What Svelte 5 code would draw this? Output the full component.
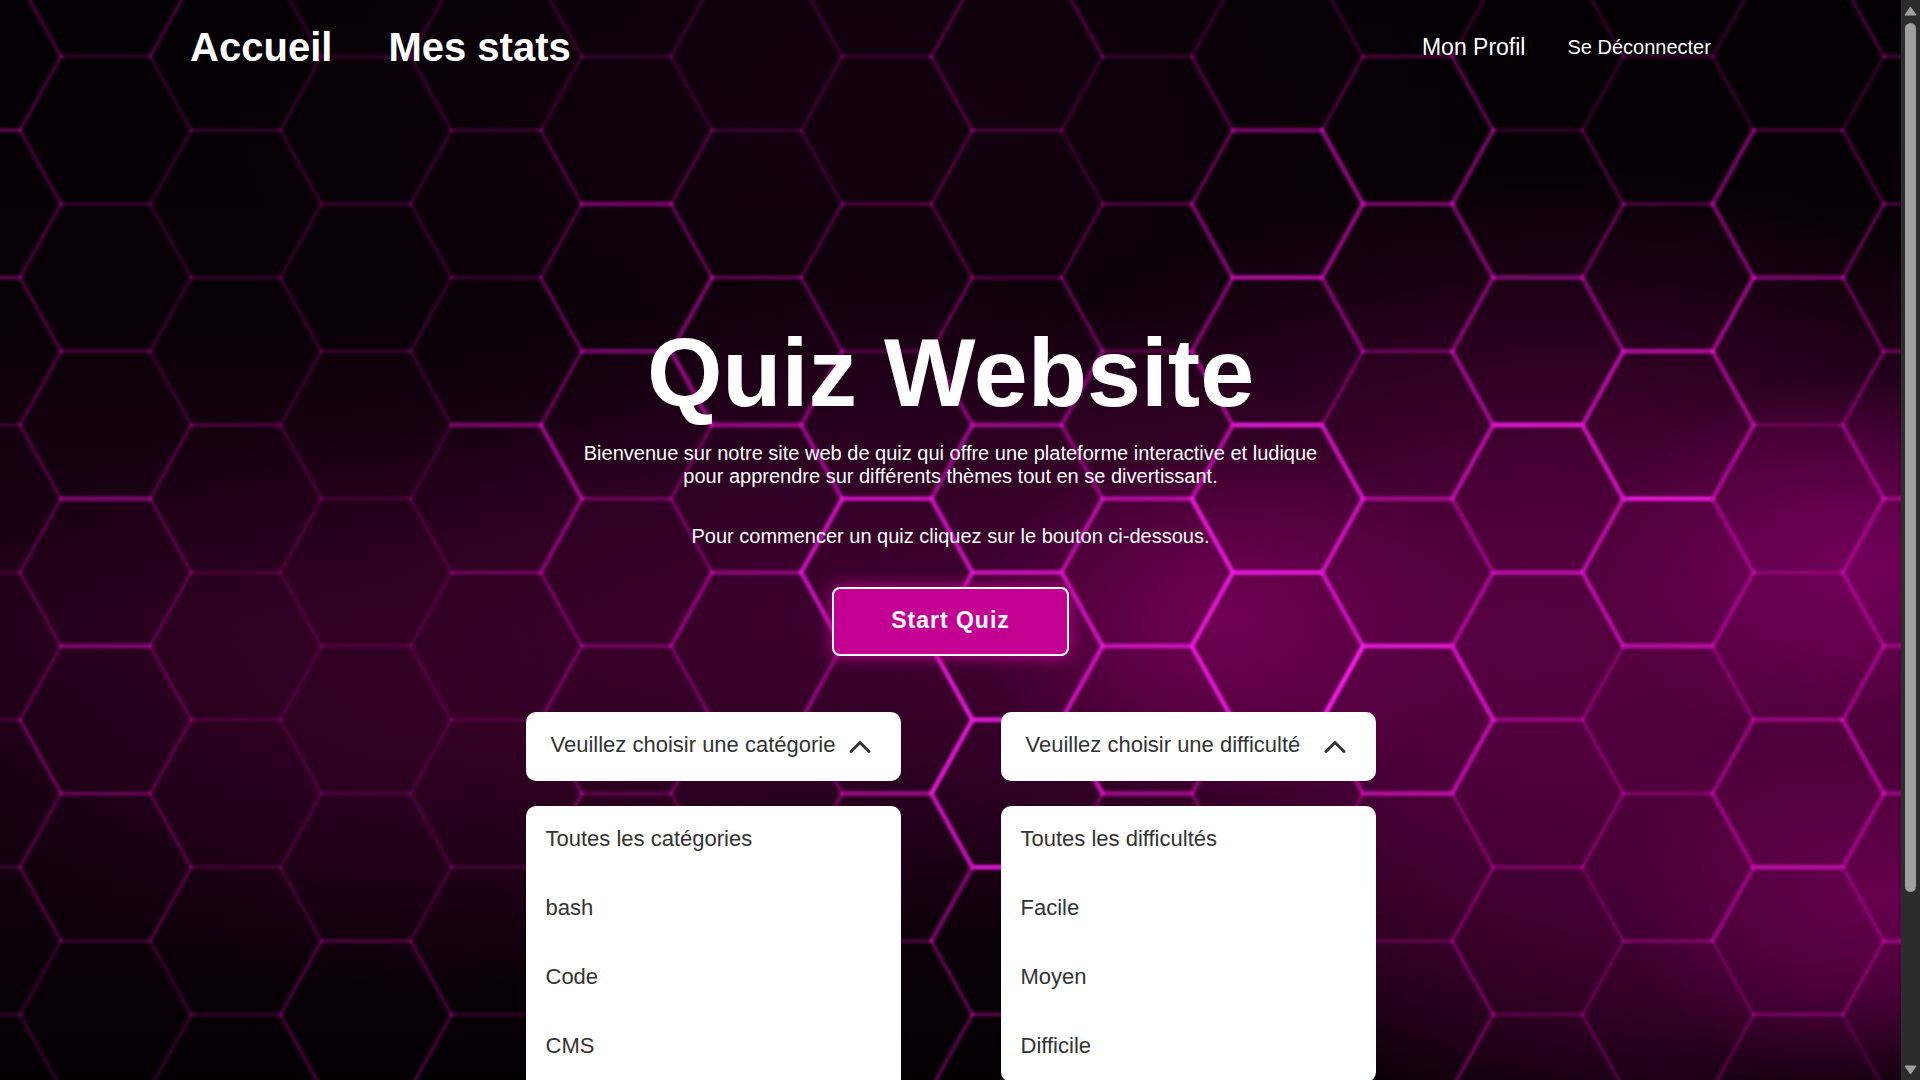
<script>
  // Honeycomb backdrop: every string holds edge brightness (0-9), top to bottom.
  const COL = 130.2;
  const ROW = 73.7;
  const rowY = (j) => 56.5 + ROW * j;

  // Flat edges, one string per column, starting with column -1.
  const flats = [
    '3311111', '1124431', '1121111', '1111112', '1143111', '1443321', '1354432', '1227652',
    '2257883', '1226752', '4688742', '2435862', '1486432', '1268633', '2423463', '2234444',
  ];

  // Slanted edges, one string per gap between columns.
  const slants = [
    '222222222232211', '211111222222211', '111111111111122', '111111111111122',
    '112233543333222', '112345334332222', '111234577433222', '222234577887433',
    '211234467773322', '123445688843222', '125543777953222', '134445645763333',
    '112346766333222', '114455544344422', '212333444454331',
  ];

  const paint = (level) => {
    const t = level / 9;
    return `rgba(${Math.round(165 + 75 * t)}, ${Math.round(30 * t)}, ${Math.round(130 + 100 * t)}, ${(0.15 + 0.83 * t).toFixed(2)})`;
  };

  const edges = [];
  flats.forEach((levels, i) => {
    const c = i - 1;
    const x = 61 + COL * c;
    const first = c % 2 === 0 ? 0 : 1;
    [...levels].forEach((v, k) => {
      const y = rowY(first + 2 * k);
      edges.push({ x1: x, y1: y, x2: x + 89, y2: y, v: Number(v) });
    });
  });
  slants.forEach((levels, g) => {
    const nodeX = (j) => (Math.abs(j) % 2 === g % 2 ? 61 : 20) + COL * g;
    [...levels].forEach((v, k) => {
      const j = k - 1;
      edges.push({ x1: nodeX(j), y1: rowY(j), x2: nodeX(j + 1), y2: rowY(j + 1), v: Number(v) });
    });
  });

  const glows = [
    { x: 860, y: 100, rx: 640, ry: 360, color: '#170011', o: 0.8 },
    { x: 430, y: 690, rx: 500, ry: 300, color: '#3a0029', o: 0.8 },
    { x: 900, y: 600, rx: 520, ry: 330, color: '#440034', o: 0.85 },
    { x: 1560, y: 640, rx: 680, ry: 470, color: '#56003f', o: 1 },
    { x: 1700, y: 800, rx: 480, ry: 420, color: '#50003c', o: 0.8 },
    { x: 1235, y: 620, rx: 260, ry: 180, color: '#80005f', o: 0.75 },
    { x: 1500, y: 640, rx: 300, ry: 220, color: '#580044', o: 0.6 },
    { x: 1860, y: 565, rx: 270, ry: 190, color: '#86006a', o: 0.7 },
    { x: 1880, y: 900, rx: 260, ry: 190, color: '#78005c', o: 0.7 },
  ];

  const menus = [
    {
      id: 'categorie',
      label: 'Veuillez choisir une catégorie',
      options: ['Toutes les catégories', 'bash', 'Code', 'CMS'],
      more: true,
    },
    {
      id: 'difficulte',
      label: 'Veuillez choisir une difficulté',
      options: ['Toutes les difficultés', 'Facile', 'Moyen', 'Difficile'],
      more: false,
    },
  ];

  let open = $state({ categorie: true, difficulte: true });
</script>

<div class="window">
  <div class="page">
    <svg class="backdrop" viewBox="0 0 1901 1080" preserveAspectRatio="xMidYMid slice" aria-hidden="true">
      <defs>
        <linearGradient id="base" x1="0" y1="0" x2="0" y2="1">
          <stop offset="0" stop-color="#030003" />
          <stop offset="0.28" stop-color="#080006" />
          <stop offset="0.58" stop-color="#220019" />
          <stop offset="0.82" stop-color="#10000c" />
          <stop offset="1" stop-color="#030002" />
        </linearGradient>
        {#each glows as g, i}
          <radialGradient id="glow{i}">
            <stop offset="0" stop-color={g.color} stop-opacity={g.o} />
            <stop offset="0.5" stop-color={g.color} stop-opacity={g.o * 0.55} />
            <stop offset="1" stop-color={g.color} stop-opacity="0" />
          </radialGradient>
        {/each}
      </defs>
      <rect width="1901" height="1080" fill="url(#base)" />
      {#each glows as g, i}
        <ellipse cx={g.x} cy={g.y} rx={g.rx} ry={g.ry} fill="url(#glow{i})" />
      {/each}
      <g class="edges">
        {#each edges as e}
          <line x1={e.x1} y1={e.y1} x2={e.x2} y2={e.y2} stroke={paint(e.v)} stroke-width={e.v > 3 ? 5 : 4} />
        {/each}
      </g>
    </svg>

    <header>
      <nav class="main-nav" aria-label="Principal">
        <a href="#accueil">Accueil</a>
        <a href="#stats">Mes stats</a>
      </nav>
      <nav class="user-nav" aria-label="Compte">
        <a class="profile" href="#profil">Mon Profil</a>
        <a href="#deconnexion">Se Déconnecter</a>
      </nav>
    </header>

    <main>
      <h1>Quiz Website</h1>
      <p class="intro">
        Bienvenue sur notre site web de quiz qui offre une plateforme interactive et ludique
        pour apprendre sur différents thèmes tout en se divertissant.
      </p>
      <p class="hint">Pour commencer un quiz cliquez sur le bouton ci-dessous.</p>
      <button class="start" type="button">Start Quiz</button>

      <div class="menus">
        {#each menus as menu}
          <div class="menu">
            <button
              class="toggle"
              type="button"
              id="{menu.id}-toggle"
              aria-haspopup="listbox"
              aria-expanded={open[menu.id]}
              onclick={() => (open[menu.id] = !open[menu.id])}
            >
              <span>{menu.label}</span>
              <svg class="chevron" class:closed={!open[menu.id]} viewBox="0 0 24 24" aria-hidden="true">
                <path d="M3 16.5 12 7.5 21 16.5" />
              </svg>
            </button>
            {#if open[menu.id]}
              <ul class="options" class:more={menu.more} role="listbox" aria-labelledby="{menu.id}-toggle">
                {#each menu.options as option}
                  <li role="option" aria-selected="false">{option}</li>
                {/each}
              </ul>
            {/if}
          </div>
        {/each}
      </div>
    </main>
  </div>

  <div class="scrollbar" aria-hidden="true">
    <svg viewBox="0 0 13 10"><path d="M6.5 1 12 9H1Z" /></svg>
    <div class="track"><div class="thumb"></div></div>
    <svg viewBox="0 0 13 10"><path d="M6.5 9 1 1H12Z" /></svg>
  </div>
</div>

<style>
  :global(body) {
    margin: 0;
    background: #000;
  }

  .window {
    display: flex;
    height: 100vh;
    overflow: hidden;
    font-family: 'Liberation Sans', Arial, sans-serif;
    font-size: 20px;
    color: #fff;
  }

  .page {
    position: relative;
    flex: 1;
    min-width: 0;
    overflow: hidden;
  }

  .backdrop {
    position: absolute;
    inset: 0;
    width: 100%;
    height: 100%;
  }

  .edges {
    stroke-linecap: round;
    filter: blur(1px);
  }

  header {
    position: relative;
    display: flex;
    justify-content: space-between;
    align-items: center;
    height: 94px;
    padding: 0 10%;
  }

  nav {
    display: flex;
    align-items: center;
  }

  nav a {
    color: #fff;
    text-decoration: none;
  }

  .main-nav {
    gap: 56px;
    font-size: 40px;
    font-weight: bold;
  }

  .user-nav {
    gap: 42px;
  }

  .profile {
    font-size: 23px;
  }

  main {
    position: relative;
    display: flex;
    flex-direction: column;
    align-items: center;
    padding-top: 224px;
    text-align: center;
  }

  h1 {
    margin: 0 0 14px;
    font-size: 97px;
    line-height: 110px;
  }

  p {
    margin: 0;
    line-height: 23px;
  }

  .intro {
    max-width: 760px;
    margin-bottom: 37px;
  }

  .hint {
    margin-bottom: 39px;
  }

  button {
    font-family: inherit;
    cursor: pointer;
  }

  .start {
    height: 69px;
    padding: 0 57px 2px;
    border: 2px solid #fff;
    border-radius: 8px;
    background: #c40093;
    box-shadow: 0 0 16px #c40093;
    color: #fff;
    font-size: 23px;
    font-weight: bold;
    letter-spacing: 1px;
  }

  .menus {
    display: flex;
    align-items: flex-start;
    gap: 100px;
    margin-top: 56px;
  }

  .menu {
    display: flex;
    flex-direction: column;
    gap: 25px;
    width: 375px;
    color: #333;
    font-size: 22px;
    text-align: left;
  }

  .toggle {
    display: flex;
    justify-content: space-between;
    align-items: center;
    height: 69px;
    padding: 0 29px 4px 25px;
    border: 0;
    border-radius: 10px;
    background: #fff;
    color: inherit;
    font-size: inherit;
  }

  .chevron {
    width: 24px;
    height: 24px;
    margin-top: 4px;
    fill: none;
    stroke: #333;
    stroke-width: 3;
    stroke-linecap: round;
  }

  .closed {
    transform: rotate(180deg);
  }

  .options {
    margin: 0;
    padding: 0;
    border-radius: 10px;
    background: #fff;
    list-style: none;
  }

  .more {
    padding-bottom: 69px;
  }

  .options li {
    padding: 20px 20px 23px;
    line-height: 26px;
  }

  .scrollbar {
    display: flex;
    flex-direction: column;
    align-items: center;
    gap: 7px;
    box-sizing: border-box;
    width: 19px;
    padding: 6px 0 5px;
    background: #2c2c2c;
  }

  .scrollbar svg {
    width: 13px;
    height: 10px;
    fill: #9f9f9f;
    stroke: #9f9f9f;
    stroke-linejoin: round;
  }

  .track {
    flex: 1;
    width: 11px;
  }

  .thumb {
    height: 84%;
    border-radius: 6px;
    background: #9f9f9f;
  }
</style>
